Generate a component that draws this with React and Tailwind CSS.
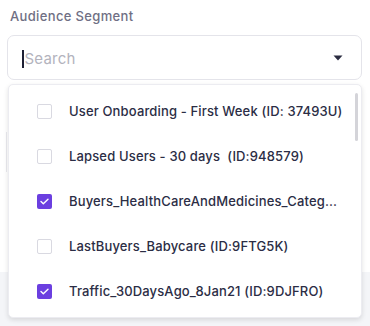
import React from "react";

const items = [
  { label: "User Onboarding - First Week (ID: 37493U)", checked: false },
  { label: "Lapsed Users - 30 days  (ID:948579)", checked: false },
  { label: "Buyers_HealthCareAndMedicines_Categ...", checked: true },
  { label: "LastBuyers_Babycare (ID:9FTG5K)", checked: false },
  { label: "Traffic_30DaysAgo_8Jan21 (ID:9DJFRO)", checked: true },
];

function Check({ checked }) {
  if (checked) {
    return (
      <span className="flex h-[15px] w-[15px] shrink-0 items-center justify-center rounded-[2px] bg-[#6b3fe0]">
        <svg width="9" height="7" viewBox="0 0 9 7" fill="none">
          <path d="M1 3.6 L3.3 5.8 L8 1.2" stroke="white" strokeWidth="1.4" strokeLinecap="round" strokeLinejoin="round" />
        </svg>
      </span>
    );
  }
  return <span className="h-[15px] w-[15px] shrink-0 rounded-[2px] border border-[#d9d9e1] bg-white" />;
}

export default function App() {
  return (
    <div
      className="relative flex h-[326px] w-[370px] flex-col overflow-hidden bg-white"
      style={{ fontFamily: "Inter, 'Noto Sans', sans-serif" }}
    >
      <div className="px-[10px] pt-[8px] text-[13px] font-medium leading-[16px] tracking-[0.35px] text-[#6f6f84]">Audience Segment</div>
      <div className="mx-[7px] mt-[11px] flex h-[45px] w-[355px] items-center rounded-[7px] border border-[#e4e4ea] bg-white pl-[14px] pr-[18px] pt-[3px]">
        <span className="h-[18px] w-[1.5px] bg-[#1e2035]" />
        <span className="ml-[1px] flex-1 text-[15px] tracking-[0.2px] text-[#b3b3bd]">Search</span>
        <svg width="10" height="6" viewBox="0 0 10 6" className="-mt-[3px]">
          <path d="M0.5 0.5 L9.5 0.5 L5 5.5 Z" fill="#2a2c40" />
        </svg>
      </div>
      <div className="mt-[52px] ml-[0px] h-[40px] w-[7px] border-r border-[#e9e9ee]" />
      <div className="mt-auto h-[54px] w-full bg-[#f4f5f8]" />

      <div className="absolute left-[8px] top-[84px] h-[234px] w-[354px] rounded-[5px] border border-[#ececf1] bg-white pt-[4px] shadow-[0_2px_5px_rgba(0,0,0,0.12)]">
        <div className="absolute right-[3px] top-[8px] h-[48px] w-[3px] rounded-full bg-[#d4d4d9]" />
        {items.map((it, i) => (
          <div key={i} className="flex h-[45px] items-center pl-[28px]">
            <Check checked={it.checked} />
            <span className="ml-[17px] whitespace-pre text-[13px] font-medium tracking-[0.15px] text-[#2b2d45]">{it.label}</span>
          </div>
        ))}
      </div>
    </div>
  );
}
